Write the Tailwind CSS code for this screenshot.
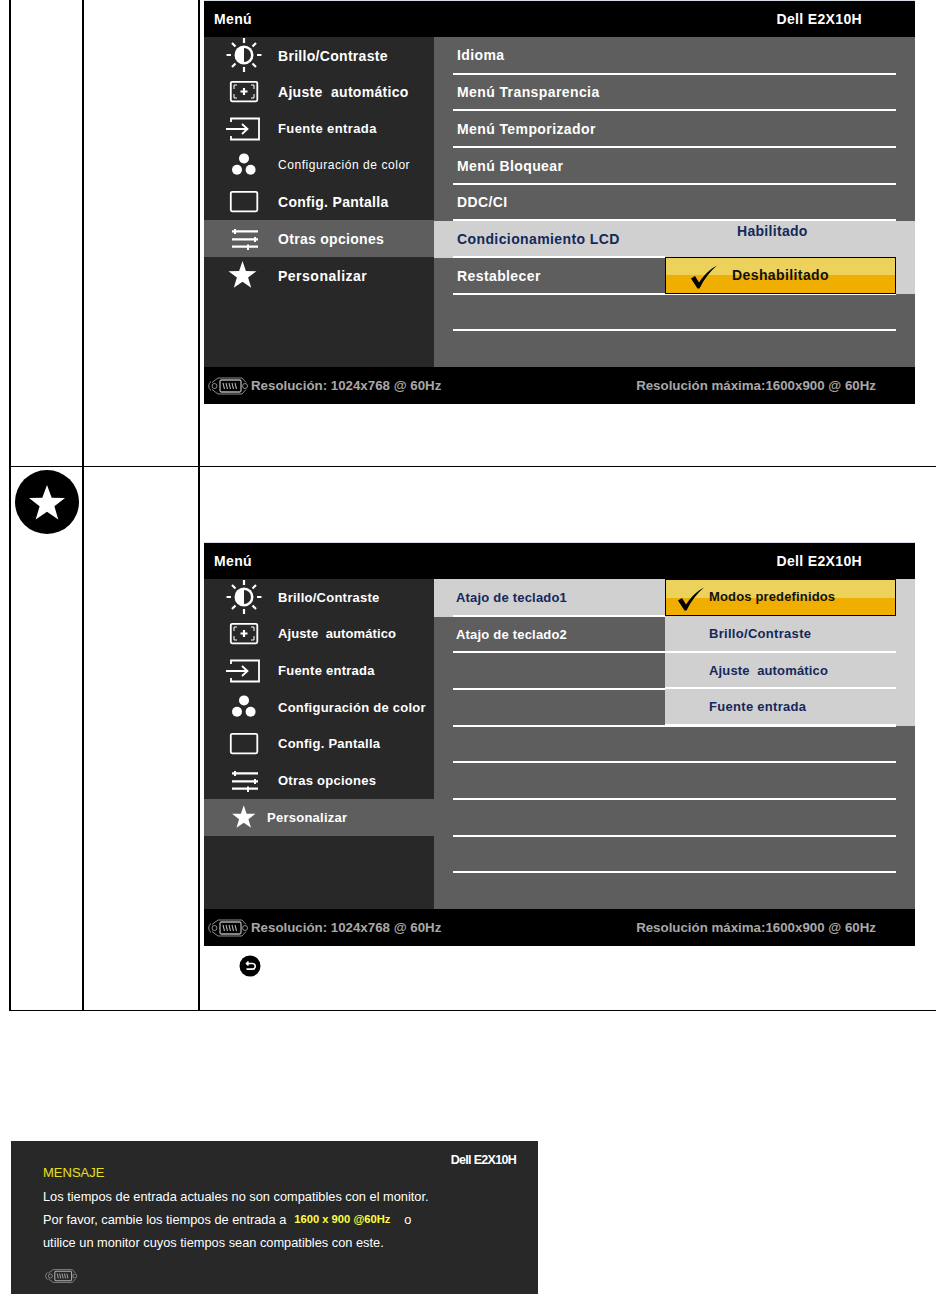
<!DOCTYPE html>
<html lang="es">
<head>
<meta charset="utf-8">
<title>Dell E2X10H</title>
<script src="https://cdn.jsdelivr.net/npm/@tailwindcss/browser@4"></script>
</head>
<body class="bg-white">
<svg class="hidden" xmlns="http://www.w3.org/2000/svg">
  <symbol id="i-sun" viewBox="0 0 40 36">
    <circle cx="20" cy="18" r="9.500" fill="#fff"/>
    <path d="M20 11a7 7 0 0 1 0 14z" fill="#282828"/>
    <path d="M20 1v5M20 30v5M2.500 18h4.500M33 18h4.500M8 6l3.500 3.500M32 6l-3.500 3.500M8 30l3.500-3.500M32 30l-3.500-3.500" stroke="#fff" stroke-width="2.200" fill="none"/>
  </symbol>
  <symbol id="i-auto" viewBox="0 0 40 36">
    <rect x="6.800" y="7.800" width="26.500" height="19.500" rx="1.500" stroke="#fff" stroke-width="1.800" fill="none"/>
    <path d="M10 15v-4h3M27 11h3v4M10 20v4h3M27 24h3v-4" stroke="#fff" stroke-width="1" fill="none"/>
    <path d="M20 14v7M16.500 17.500h7" stroke="#fff" stroke-width="2.200" fill="none"/>
  </symbol>
  <symbol id="i-input" viewBox="0 0 40 36">
    <path d="M7 11V7.500h28v21H7V25" stroke="#fff" stroke-width="1.800" fill="none"/>
    <path d="M2 18h21M18 13l5.500 5-5.500 5" stroke="#fff" stroke-width="1.800" fill="none"/>
  </symbol>
  <symbol id="i-color" viewBox="0 0 40 36">
    <circle cx="20" cy="11.400" r="5" fill="#fff"/>
    <circle cx="13" cy="22.700" r="5" fill="#fff"/>
    <circle cx="26.600" cy="22.700" r="5" fill="#fff"/>
  </symbol>
  <symbol id="i-screen" viewBox="0 0 40 36">
    <rect x="6.800" y="7.800" width="26.500" height="19.500" rx="1.500" stroke="#fff" stroke-width="1.800" fill="none"/>
  </symbol>
  <symbol id="i-opts" viewBox="0 0 40 36">
    <path d="M8 10.400h26M8 18.400h26M8 25.700h26" stroke="#fff" stroke-width="2.200" fill="none"/>
    <path d="M11 8v5M31 16v5M24 23.500v5.500" stroke="#fff" stroke-width="2" fill="none"/>
  </symbol>
  <symbol id="i-star" viewBox="0 0 40 36">
    <path d="M18.500 4l3.400 10 10.600.2-8.400 6.400 3.100 10.200-8.700-6-8.700 6 3.100-10.200-8.400-6.400 10.600-.2z" fill="#fff"/>
  </symbol>
  <symbol id="i-vga" viewBox="0 0 44 20">
    <g fill="none" stroke="#b0b0b0" stroke-width=".8">
      <path d="M4 5.500c-3 2-3 7 0 9"/>
      <circle cx="7.500" cy="10" r="2.500"/>
      <circle cx="38" cy="10" r="2.500"/>
      <path d="M5 6.500 11 2h24l4 4.500M5 13.500l6 4.500h24l4-4.500"/>
      <rect x="13" y="4" width="21" height="12" rx="1.500" stroke-width="1.300"/>
      <path d="M16 7l1.500 6M19 7l1.500 6M22 7l1.500 6M25 7l1.500 6M28 7l1.500 6" stroke-width="1.100"/>
    </g>
  </symbol>
  <symbol id="i-check" viewBox="0 0 28 24">
    <path d="M1 13.500 5 11l4 6.500C14 10 20 4 27 .500 20 6.500 14 14 9.500 23.500H7.500z" fill="#000"/>
  </symbol>
</svg>

<div class="w-[936px] h-[1296px] overflow-hidden font-['Liberation_Sans',Arial,sans-serif]">

  <div class="ml-[9px] grid grid-cols-[73px_116px_738px]">
    <!-- fila otras opciones -->
    <div class="h-[466px] border-l-2 border-black"></div>
    <div class="h-[466px] border-l-2 border-black"></div>
    <div class="h-[466px] border-l-2 border-black pl-[4px]">
      <div class="w-[711px] h-[404px] border-t border-[#d8dde8] flex flex-col">
        <div class="h-[36px] bg-black flex items-center justify-between pl-[10px] pr-[53px] text-white text-[14px] font-bold tracking-[.35px]">
          <span>Menú</span><span>Dell E2X10H</span>
        </div>
        <div class="h-[330px] flex">
          <div class="w-[230px] bg-[#282828] text-white text-[14px] font-bold tracking-[.3px]">
            <div class="h-[36.67px] flex items-center pl-[20px]"><svg class="w-[40px] h-[36px] mr-[14px]"><use href="#i-sun"/></svg><span class="mt-[2px]">Brillo/Contraste</span></div>
            <div class="h-[36.67px] flex items-center pl-[20px]"><svg class="w-[40px] h-[36px] mr-[14px]"><use href="#i-auto"/></svg><span class="mt-[2px]">Ajuste&nbsp; automático</span></div>
            <div class="h-[36.67px] flex items-center pl-[20px] text-[13px] tracking-[.4px]"><svg class="w-[40px] h-[36px] mr-[14px]"><use href="#i-input"/></svg><span>Fuente entrada</span></div>
            <div class="h-[36.67px] flex items-center pl-[20px] text-[12px] font-normal tracking-[.55px]"><svg class="w-[40px] h-[36px] mr-[14px]"><use href="#i-color"/></svg><span>Configuración de color</span></div>
            <div class="h-[36.67px] flex items-center pl-[20px]"><svg class="w-[40px] h-[36px] mr-[14px]"><use href="#i-screen"/></svg><span class="mt-[2px]">Config. Pantalla</span></div>
            <div class="h-[36.67px] flex items-center pl-[20px] bg-[#5e5e5e]"><svg class="w-[40px] h-[36px] mr-[14px]"><use href="#i-opts"/></svg><span class="mt-[2px]">Otras opciones</span></div>
            <div class="h-[36.67px] flex items-center pl-[20px] tracking-[.5px]"><svg class="w-[40px] h-[36px] mr-[14px]"><use href="#i-star"/></svg><span class="mt-[2px]">Personalizar</span></div>
          </div>
          <div class="relative w-[481px] bg-[#5e5e5e] text-white text-[14px] font-bold tracking-[.4px]">
            <div class="h-[37.67px] px-[19px]"><div class="h-full border-b-2 border-white flex items-center pl-[4px] pt-[2px]">Idioma</div></div>
            <div class="h-[36.67px] px-[19px]"><div class="h-full border-b-2 border-white flex items-center pl-[4px] pt-[2px]">Menú Transparencia</div></div>
            <div class="h-[36.67px] px-[19px]"><div class="h-full border-b-2 border-white flex items-center pl-[4px] pt-[2px]">Menú Temporizador</div></div>
            <div class="h-[36.67px] px-[19px]"><div class="h-full border-b-2 border-white flex items-center pl-[4px] pt-[2px]">Menú Bloquear</div></div>
            <div class="h-[36.67px] px-[19px]"><div class="h-full border-b-2 border-white flex items-center pl-[4px] pt-[2px]">DDC/CI</div></div>
            <div class="h-[36.67px] px-[19px] bg-[#d0d0d0] text-[#14285a]"><div class="h-full border-b-2 border-white flex items-center pl-[4px] pt-[2px]">Condicionamiento LCD</div></div>
            <div class="h-[36.67px] px-[19px]"><div class="h-full border-b-2 border-white flex items-center pl-[4px] pt-[2px]">Restablecer</div></div>
            <div class="h-[36.67px] px-[19px]"><div class="h-full border-b-2 border-white"></div></div>
            <!-- submenu -->
            <div class="absolute left-[231px] top-[184.33px] w-[250px] h-[72.33px] bg-[#d0d0d0]">
              <div class="h-[36px] pl-[72px] text-[#14285a] tracking-[.3px]">Habilitado</div>
              <div class="w-[231px] h-[36.33px] border border-black bg-[linear-gradient(#ecd25a_50%,#f0ae00_50%)] flex items-center text-[#111]">
                <svg class="w-[28px] h-[24px] ml-[24px] mr-[14px] mt-[3px]"><use href="#i-check"/></svg><span>Deshabilitado</span>
              </div>
            </div>
          </div>
        </div>
        <div class="h-[37px] bg-black flex items-center justify-between pl-[3px] pr-[39px] text-[#a8a8a8] text-[13.300px] font-bold">
          <span class="flex items-center"><svg class="w-[44px] h-[20px]"><use href="#i-vga"/></svg><span>Resolución: 1024x768 @ 60Hz</span></span>
          <span>Resolución máxima:1600x900 @ 60Hz</span>
        </div>
      </div>
    </div>

    <!-- fila personalizar -->
    <div class="h-[545px] border-l-2 border-t border-b border-black pl-[4px] pt-[3px]">
      <div class="w-[64px] h-[64px] rounded-full bg-black flex items-center justify-center">
        <svg class="w-[40px] h-[40px] -ml-[1px]" viewBox="0 0 40 36"><path d="M20 1l4.700 12.800 13.300.200-10.600 8.300 3.900 13.200-11.300-7.800-11.300 7.800 3.900-13.200L2 14l13.300-.200z" fill="#fff"/></svg>
      </div>
    </div>
    <div class="h-[545px] border-l-2 border-t border-b border-black"></div>
    <div class="h-[545px] border-l-2 border-t border-b border-black pl-[4px] pt-[75px]">
      <div class="w-[711px] h-[404px] border-t border-[#d8dde8] flex flex-col">
        <div class="h-[36px] bg-black flex items-center justify-between pl-[10px] pr-[53px] text-white text-[14px] font-bold tracking-[.35px]">
          <span>Menú</span><span>Dell E2X10H</span>
        </div>
        <div class="h-[330px] flex">
          <div class="w-[230px] bg-[#282828] text-white text-[13px] font-bold tracking-[.25px]">
            <div class="h-[36.67px] flex items-center pl-[20px]"><svg class="w-[40px] h-[36px] mr-[14px]"><use href="#i-sun"/></svg><span>Brillo/Contraste</span></div>
            <div class="h-[36.67px] flex items-center pl-[20px]"><svg class="w-[40px] h-[36px] mr-[14px]"><use href="#i-auto"/></svg><span class="tracking-[.1px]">Ajuste&nbsp; automático</span></div>
            <div class="h-[36.67px] flex items-center pl-[20px]"><svg class="w-[40px] h-[36px] mr-[14px]"><use href="#i-input"/></svg><span>Fuente entrada</span></div>
            <div class="h-[36.67px] flex items-center pl-[20px]"><svg class="w-[40px] h-[36px] mr-[14px]"><use href="#i-color"/></svg><span>Configuración de color</span></div>
            <div class="h-[36.67px] flex items-center pl-[20px]"><svg class="w-[40px] h-[36px] mr-[14px]"><use href="#i-screen"/></svg><span>Config. Pantalla</span></div>
            <div class="h-[36.67px] flex items-center pl-[20px]"><svg class="w-[40px] h-[36px] mr-[14px]"><use href="#i-opts"/></svg><span>Otras opciones</span></div>
            <div class="h-[36.67px] flex items-center pl-[20px] bg-[#5e5e5e]"><svg class="w-[34px] h-[30px] ml-[4px] mr-[5px]"><use href="#i-star"/></svg><span>Personalizar</span></div>
          </div>
          <div class="relative w-[481px] bg-[#5e5e5e] text-white text-[13px] font-bold tracking-[.2px]">
            <div class="h-[37.67px] px-[19px] bg-[#d0d0d0] text-[#14285a]"><div class="h-full border-b-2 border-white flex items-center pl-[3px] pt-[1px]">Atajo de teclado1</div></div>
            <div class="h-[36.67px] px-[19px]"><div class="h-full border-b-2 border-white flex items-center pl-[3px] pt-[1px]">Atajo de teclado2</div></div>
            <div class="h-[36.67px] px-[19px]"><div class="h-full border-b-2 border-white"></div></div>
            <div class="h-[36.67px] px-[19px]"><div class="h-full border-b-2 border-white"></div></div>
            <div class="h-[36.67px] px-[19px]"><div class="h-full border-b-2 border-white"></div></div>
            <div class="h-[36.67px] px-[19px]"><div class="h-full border-b-2 border-white"></div></div>
            <div class="h-[36.67px] px-[19px]"><div class="h-full border-b-2 border-white"></div></div>
            <div class="h-[36.67px] px-[19px]"><div class="h-full border-b-2 border-white"></div></div>
            <!-- submenu -->
            <div class="absolute left-[231px] top-0 w-[250px] h-[147px] bg-[#d0d0d0] text-[#14285a] tracking-[.3px]">
              <div class="w-[231px] h-[37px] border border-black bg-[linear-gradient(#ecd25a_50%,#f0ae00_50%)] flex items-center text-[#111] tracking-[.15px]">
                <svg class="w-[28px] h-[24px] ml-[11px] mr-[4px] mt-[3px]"><use href="#i-check"/></svg><span class="-mt-[2px]">Modos predefinidos</span>
              </div>
              <div class="h-[36.67px] w-[231px] border-b-2 border-white flex items-center pl-[44px] pt-[1px]">Brillo/Contraste</div>
              <div class="h-[36.67px] w-[231px] border-b-2 border-white flex items-center pl-[44px] pt-[1px] tracking-[.15px]">Ajuste&nbsp; automático</div>
              <div class="h-[36.67px] w-[231px] border-b-2 border-white flex items-center pl-[44px] pt-[1px]">Fuente entrada</div>
            </div>
          </div>
        </div>
        <div class="h-[37px] bg-black flex items-center justify-between pl-[3px] pr-[39px] text-[#a8a8a8] text-[13.300px] font-bold">
          <span class="flex items-center"><svg class="w-[44px] h-[20px]"><use href="#i-vga"/></svg><span>Resolución: 1024x768 @ 60Hz</span></span>
          <span>Resolución máxima:1600x900 @ 60Hz</span>
        </div>
      </div>
      <svg class="w-[22px] h-[22px] ml-[35px] mt-[9px]" viewBox="0 0 22 22">
        <circle cx="11" cy="11" r="10.500" fill="#000"/>
        <path d="M7.500 8.500h6a2.800 2.800 0 0 1 0 5.600H7.500M9.500 6.500l-2 2 2 2" stroke="#fff" stroke-width="1.600" fill="none"/>
      </svg>
    </div>
  </div>

  <!-- mensaje -->
  <div class="relative ml-[11px] mt-[130px] w-[527px] h-[153px] bg-[#282828] text-white text-[12.800px]">
    <div class="absolute right-[22px] top-[10px] text-[12.500px] font-bold tracking-[-.7px]">Dell E2X10H</div>
    <div class="pl-[32px] pt-[24px] text-[13px] text-[#e8e020] leading-[16px]">MENSAJE</div>
    <div class="pl-[32px] pt-[3.500px] leading-[23px]">
      <p>Los tiempos de entrada actuales no son compatibles con el monitor.</p>
      <p class="flex">Por favor, cambie los tiempos de entrada a<span class="ml-[8px] w-[110px] text-[#ffff40] text-[11.200px] font-bold">1600 x 900 @60Hz</span><span>o</span></p>
      <p>utilice un monitor cuyos tiempos sean compatibles con este.</p>
    </div>
    <svg class="w-[36px] h-[16px] ml-[33px] mt-[14.500px]"><use href="#i-vga"/></svg>
  </div>
</div>
</body>
</html>
